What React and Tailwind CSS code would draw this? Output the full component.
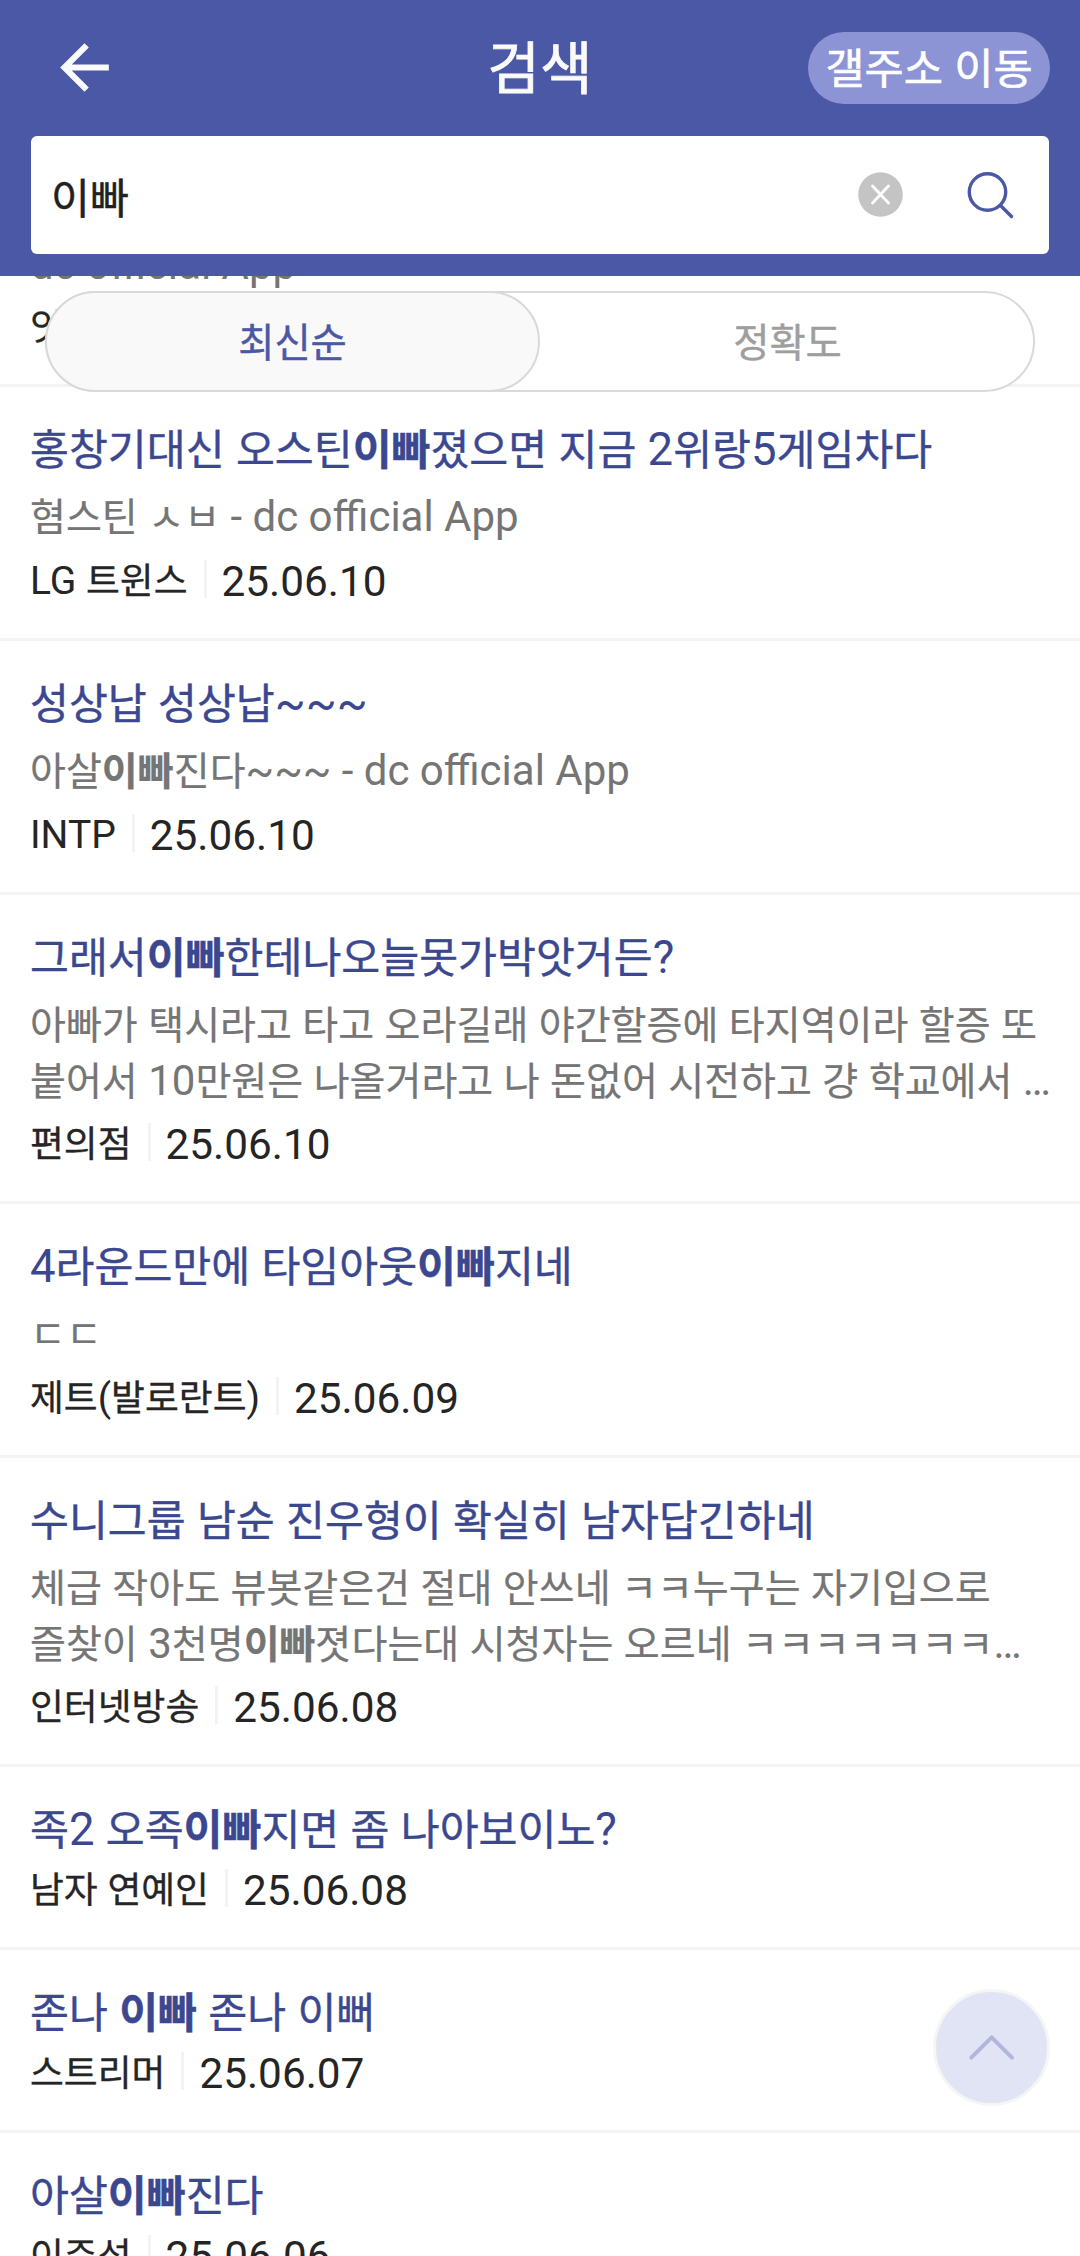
import { useState } from 'react';

const results = [
  {
    title: '홍창기대신 오스틴*이빠*졌으면 지금 2위랑5게임차다',
    body: ['혐스틴 ㅅㅂ - dc official App'],
    gallery: 'LG 트윈스',
    date: '25.06.10',
  },
  {
    title: '성상납 성상납~~~',
    body: ['아살*이빠*진다~~~ - dc official App'],
    gallery: 'INTP',
    date: '25.06.10',
  },
  {
    title: '그래서*이빠*한테나오늘못가박앗거든?',
    body: [
      '아빠가 택시라고 타고 오라길래 야간할증에 타지역이라 할증 또',
      '붙어서 10만원은 나올거라고 나 돈없어 시전하고 걍 학교에서 …',
    ],
    gallery: '편의점',
    date: '25.06.10',
  },
  {
    title: '4라운드만에 타임아웃*이빠*지네',
    body: ['ㄷㄷ'],
    gallery: '제트(발로란트)',
    date: '25.06.09',
  },
  {
    title: '수니그룹 남순 진우형이 확실히 남자답긴하네',
    body: [
      '체급 작아도 뷰봇같은건 절대 안쓰네 ㅋㅋ누구는 자기입으로',
      '즐찾이 3천명*이빠*졋다는대 시청자는 오르네 ㅋㅋㅋㅋㅋㅋㅋ…',
    ],
    gallery: '인터넷방송',
    date: '25.06.08',
  },
  {
    title: '족2 오족*이빠*지면 좀 나아보이노?',
    gallery: '남자 연예인',
    date: '25.06.08',
  },
  {
    title: '존나 *이빠* 존나 이뻐',
    gallery: '스트리머',
    date: '25.06.07',
  },
  {
    title: '아살*이빠*진다',
    gallery: '이주성',
    date: '25.06.06',
  },
];

// Hangul runs are set a little smaller than the latin text around them,
// with a hairline stroke so both look equally heavy
function Mixed({ text, hangul }) {
  return text.split(/([\u3131-\u318e\uac00-\ud7a3]+)/).map((run, i) =>
    i % 2 ? (
      <span key={i} className={`leading-[0] ${hangul}`}>{run}</span>
    ) : (
      run
    )
  );
}

// Parts between asterisks are the matched keyword
function Highlight({ text, hangul }) {
  return text.split('*').map((part, i) =>
    i % 2 ? (
      <b key={i} className="font-bold leading-[0]"><Mixed text={part} hangul={hangul} /></b>
    ) : (
      <Mixed key={i} text={part} hangul={hangul} />
    )
  );
}

function ResultItem({ item }) {
  return (
    <li className="border-b-3 border-[#f3f3f3] pt-9 pr-5 pb-8 pl-[30px]">
      <h2 className="h-[54px] whitespace-nowrap text-[45.5px] leading-[54px] text-[#3b4890]">
        <Highlight text={item.title} hangul="text-[42.3px] [-webkit-text-stroke:0.4px]" />
      </h2>
      {item.body && (
        <div
          className={`mt-3 text-[42px] leading-[56px] text-[#757575] ${
            item.body.length > 1 ? 'pb-[2px]' : 'pb-[3px]'
          }`}
        >
          {item.body.map((line) => (
            <p key={line} className="h-[56px] whitespace-nowrap">
              <Highlight text={line} hangul="text-[39.05px] [-webkit-text-stroke:0.2px]" />
            </p>
          ))}
        </div>
      )}
      <div className="mt-[10px] flex h-12 text-[#252525]">
        <span className="text-[39px] leading-[46px]">
          <Mixed text={item.gallery} hangul="text-[36.8px] [-webkit-text-stroke:0.3px]" />
        </span>
        <span className="mt-0.5 mr-[15px] ml-4 h-[38px] w-[3px] bg-[#f3f3f3]" />
        <span className="text-[42.3px] leading-[48px]">{item.date}</span>
      </div>
    </li>
  );
}

function Header() {
  return (
    <header className="z-10 h-[276px] shrink-0 bg-[#4b58a6] px-[31px] pt-[31px]">
      <div className="grid h-[72px] grid-cols-[1fr_auto_1fr] items-center">
        <button className="ml-[17px] w-[73px]">
          <svg viewBox="0 0 24 24" className="size-[73px] fill-[#fafafa]">
            <path d="M20 11H7.83l5.59-5.59L12 4l-8 8 8 8 1.41-1.41L7.83 13H20v-2z" />
          </svg>
        </button>
        <h1 className="text-[62px] leading-[72px] text-[#fafafa]">
          <Mixed text="검색" hangul="text-[57px] [-webkit-text-stroke:0.8px]" />
        </h1>
        <button className="-mr-px h-[72px] w-[242px] justify-self-end rounded-full bg-[#8c94d6] text-[46px] leading-[72px] whitespace-nowrap text-white">
          <Mixed text="갤주소 이동" hangul="text-[42.6px] [-webkit-text-stroke:0.6px]" />
        </button>
      </div>
      <div className="mt-[33px] flex h-[118px] w-[1018px] items-center rounded-md bg-white pr-[34px] pl-5">
        <span className="flex-1 pt-[5px] text-[46px] leading-[54px] text-[#212121]">
          <Mixed text="이빠" hangul="text-[42.3px] [-webkit-text-stroke:0.4px]" />
        </span>
        <svg viewBox="0 0 45 45" className="mb-px size-[45px]">
          <circle cx="22.5" cy="22.5" r="22.3" fill="#c4c4c4" />
          <path d="M14.5 14l16 17M30.5 14l-16 17" stroke="#fff" strokeWidth="2.8" strokeLinecap="round" />
        </svg>
        <svg viewBox="0 0 48 48" className="ml-[64px] size-12" fill="none" stroke="#4b58a6" strokeWidth="3.4" strokeLinecap="round">
          <circle cx="20.5" cy="21" r="18.2" />
          <path d="M33.5 34.5L44.5 45.5" />
        </svg>
      </div>
    </header>
  );
}

export default function App() {
  const [sort, setSort] = useState('latest');

  return (
    <div
      lang="ko"
      className="relative flex h-[2256px] w-[1080px] flex-col overflow-hidden bg-white font-['Roboto','Noto_Sans_CJK_KR',sans-serif]"
    >
      <Header />

      {/* Results, scrolled part of the way down */}
      <ul className="-mt-[39px] shrink-0">
        <li className="h-[150px] border-b-3 border-[#f3f3f3] pl-[30px]">
          <p className="h-[55px] text-[42px] leading-[55px] text-[#757575]">dc official App</p>
          <p className="mt-[11px] text-[39px] leading-[48px] text-[#252525]">
            <Mixed text="잇" hangul="text-[36.8px] [-webkit-text-stroke:0.3px]" />
          </p>
        </li>
        {results.map((item) => (
          <ResultItem key={item.title} item={item} />
        ))}
      </ul>

      {/* Sort tabs float over the list */}
      <div className="absolute top-[291px] left-[45px] flex h-[101px] w-[990px] rounded-full border-2 border-[#d9d9d9] bg-white text-[43px]">
        <button
          onClick={() => setSort('latest')}
          className={`-my-0.5 -ml-0.5 w-[495px] rounded-full pt-0.5 ${
            sort === 'latest' ? 'border-2 border-[#d9d9d9] bg-[#f9f9f9] text-[#4b58a6]' : 'text-[#9e9e9e]'
          }`}
        >
          <Mixed text="최신순" hangul="text-[39.4px] [-webkit-text-stroke:0.4px]" />
        </button>
        <button
          onClick={() => setSort('accuracy')}
          className={`-my-0.5 -mr-0.5 w-[495px] rounded-full pt-0.5 ${
            sort === 'accuracy' ? 'border-2 border-[#d9d9d9] bg-[#f9f9f9] text-[#4b58a6]' : 'text-[#9e9e9e]'
          }`}
        >
          <Mixed text="정확도" hangul="text-[39.4px] [-webkit-text-stroke:0.4px]" />
        </button>
      </div>

      {/* Scroll to top */}
      <button className="absolute top-[1989px] left-[933px] size-[117px] rounded-full border-3 border-[#f5f5f5] bg-[#e1e4f5]">
        <svg viewBox="0 0 111 111" className="size-[111px]" fill="none" stroke="#b1b7dc" strokeWidth="4" strokeLinecap="round" strokeLinejoin="round">
          <path d="M35.3 65.7L55.6 45.3L76 65.7" />
        </svg>
      </button>
    </div>
  );
}
